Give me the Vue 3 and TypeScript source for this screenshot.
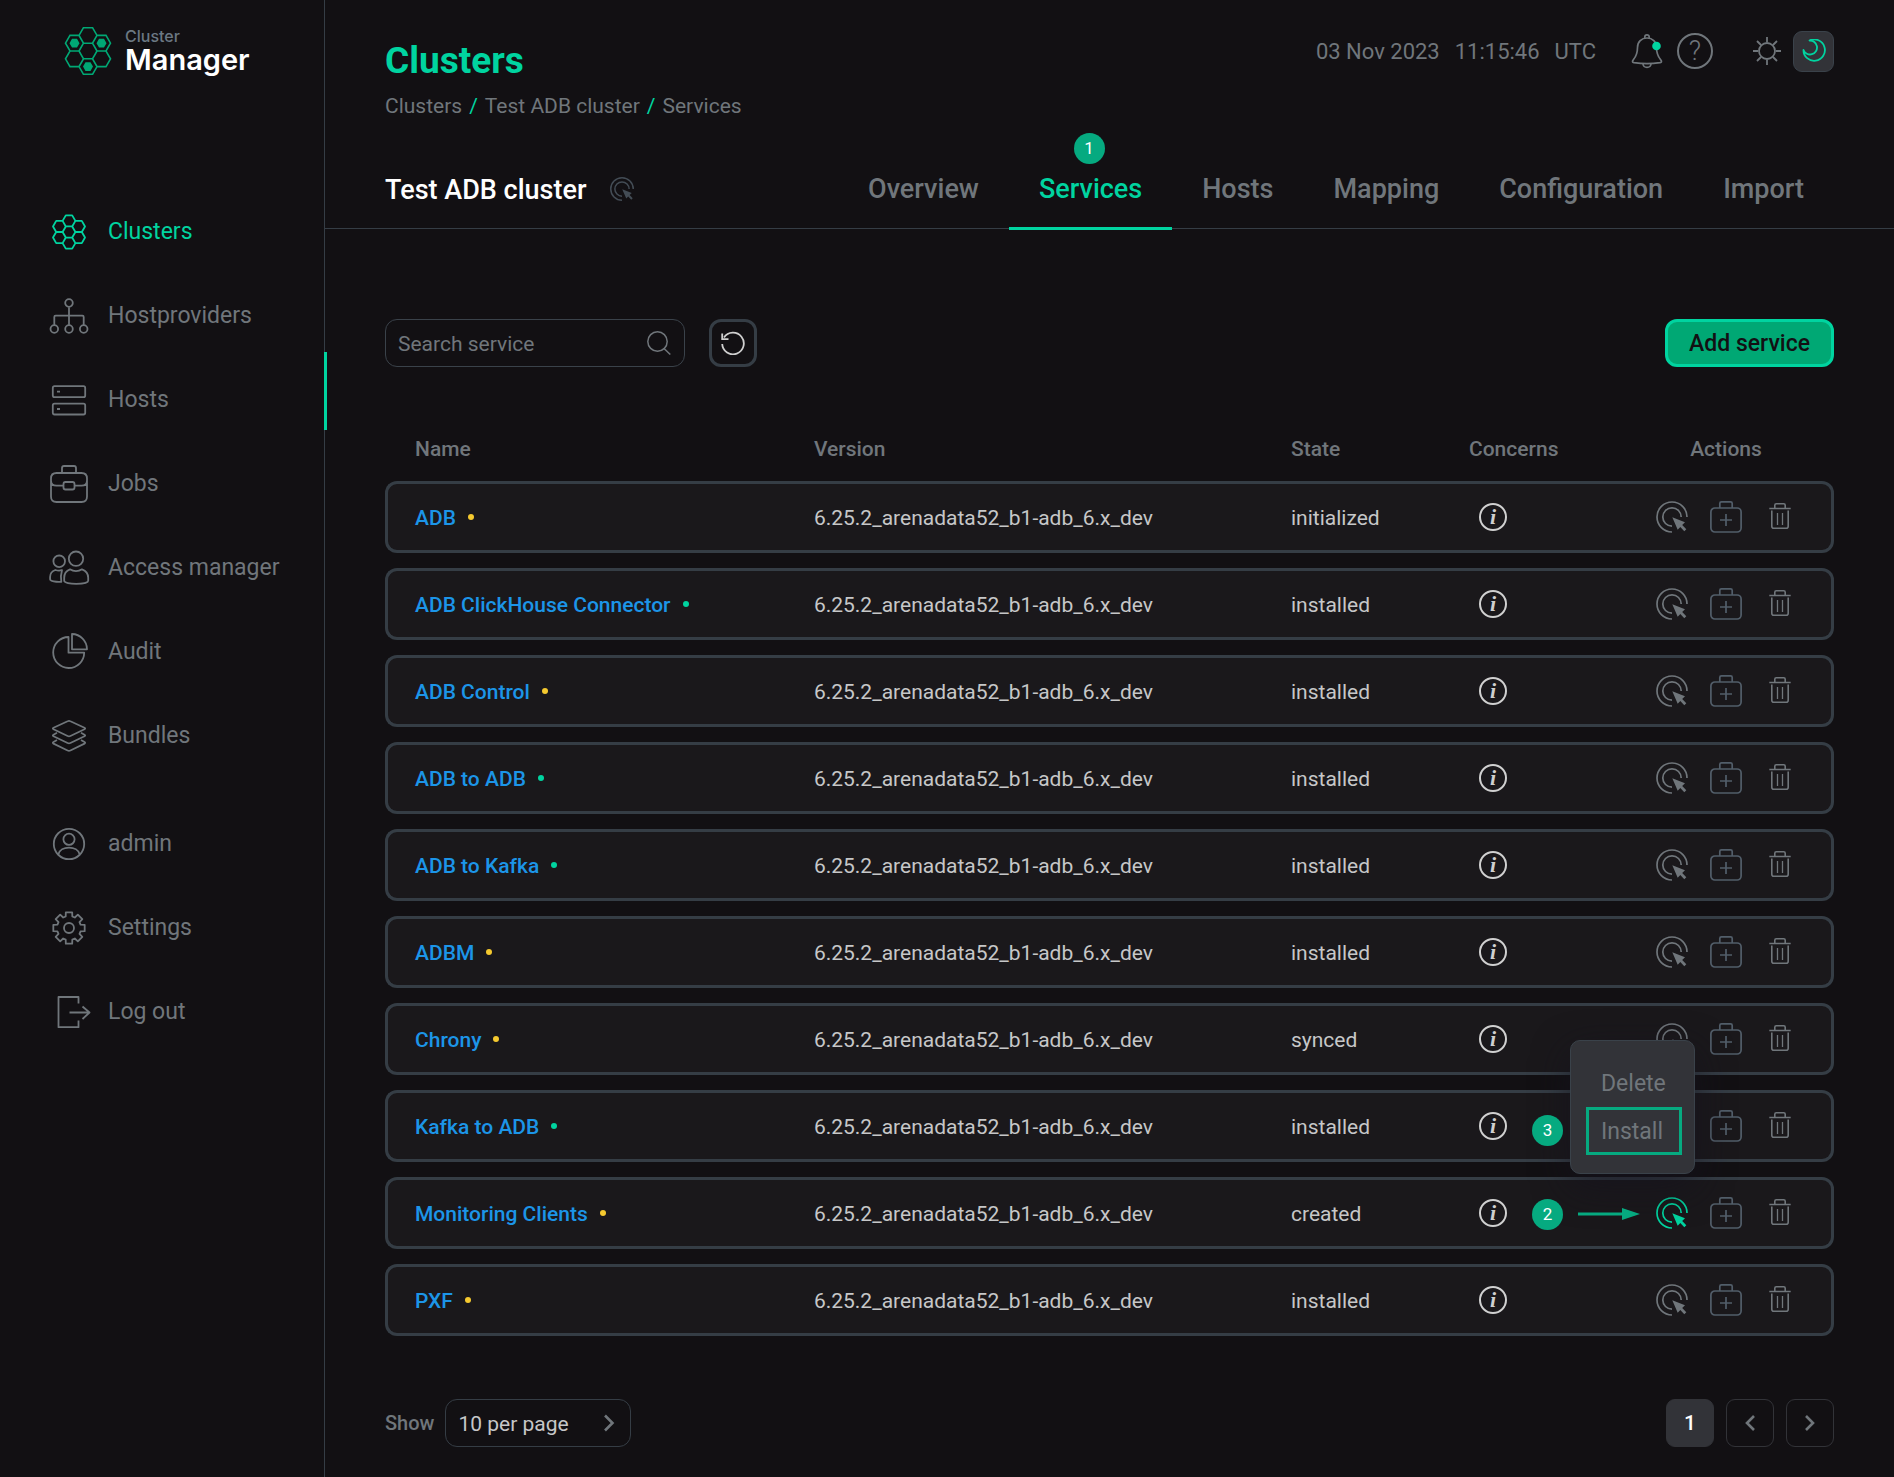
<script setup lang="ts">
import { ref } from 'vue'

interface NavItem {
  id: string
  label: string
  active?: boolean
}

interface Service {
  name: string
  state: string
  healthy: boolean
  menuOpen?: boolean
}

const mainNav: NavItem[] = [
  { id: 'clusters', label: 'Clusters', active: true },
  { id: 'hostproviders', label: 'Hostproviders' },
  { id: 'hosts', label: 'Hosts' },
  { id: 'jobs', label: 'Jobs' },
  { id: 'access', label: 'Access manager' },
  { id: 'audit', label: 'Audit' },
  { id: 'bundles', label: 'Bundles' },
]

const userNav: NavItem[] = [
  { id: 'admin', label: 'admin' },
  { id: 'settings', label: 'Settings' },
  { id: 'logout', label: 'Log out' },
]

const navGroups = [mainNav, userNav]

const tabs = ['Overview', 'Services', 'Hosts', 'Mapping', 'Configuration', 'Import']
const activeTab = 'Services'

const version = '6.25.2_arenadata52_b1-adb_6.x_dev'

const services: Service[] = [
  { name: 'ADB', state: 'initialized', healthy: false },
  { name: 'ADB ClickHouse Connector', state: 'installed', healthy: true },
  { name: 'ADB Control', state: 'installed', healthy: false },
  { name: 'ADB to ADB', state: 'installed', healthy: true },
  { name: 'ADB to Kafka', state: 'installed', healthy: true },
  { name: 'ADBM', state: 'installed', healthy: false },
  { name: 'Chrony', state: 'synced', healthy: false },
  { name: 'Kafka to ADB', state: 'installed', healthy: true },
  { name: 'Monitoring Clients', state: 'created', healthy: false, menuOpen: true },
  { name: 'PXF', state: 'installed', healthy: false },
]

const search = ref('')
const perPage = ref('10')

// Flat-top hexagon around (cx, cy) with circumradius r
function hexagon(cx: number, cy: number, r: number): string {
  const points: string[] = []
  for (let i = 0; i < 6; i++) {
    const a = (Math.PI / 3) * i
    points.push(`${(cx + r * Math.cos(a)).toFixed(2)} ${(cy + r * Math.sin(a)).toFixed(2)}`)
  }
  return `M${points.join('L')}Z`
}

// Honeycomb: one cell in the middle and six round it
function honeycomb(cx: number, cy: number, r: number): string {
  const h = Math.sqrt(3) * r
  const cells = [
    [0, 0],
    [0, -h],
    [0, h],
    [-1.5 * r, -h / 2],
    [1.5 * r, -h / 2],
    [-1.5 * r, h / 2],
    [1.5 * r, h / 2],
  ]
  return cells.map(([x, y]) => hexagon(cx + x, cy + y, r)).join('')
}

function gear(cx: number, cy: number): string {
  const points: string[] = []
  for (let i = 0; i < 8; i++) {
    const a = (Math.PI / 4) * i
    const steps: [number, number][] = [
      [12, -0.28],
      [16, -0.2],
      [16, 0.2],
      [12, 0.28],
    ]
    for (const [r, d] of steps) {
      points.push(`${(cx + r * Math.cos(a + d)).toFixed(2)} ${(cy + r * Math.sin(a + d)).toFixed(2)}`)
    }
  }
  return `M${points.join('L')}Z`
}

const logoCells = honeycomb(24, 24, 9)
const logoFill = hexagon(10.5, 16.2, 5) + hexagon(37.5, 16.2, 5) + hexagon(24, 39.6, 5)

const navPaths: Record<string, string> = {
  clusters: honeycomb(21, 22, 6.4),
  hostproviders:
    'M21 5.2a3.8 3.8 0 1 1 0 7.6a3.8 3.8 0 0 1 0-7.6M6.3 31.2a3.8 3.8 0 1 1 0 7.6a3.8 3.8 0 0 1 0-7.6M21 31.2a3.8 3.8 0 1 1 0 7.6a3.8 3.8 0 0 1 0-7.6M35.7 31.2a3.8 3.8 0 1 1 0 7.6a3.8 3.8 0 0 1 0-7.6M21 12.8V31M6.3 31V23q0-1.3 1.3-1.3H34.4q1.3 0 1.3 1.3V31',
  hosts:
    'M6.5 8.2H35.5q1.7 0 1.7 1.7V17.5q0 1.7-1.7 1.7H6.5q-1.7 0-1.7-1.7V9.9q0-1.7 1.7-1.7zM6.5 25.7H35.5q1.7 0 1.7 1.7V34.8q0 1.7-1.7 1.7H6.5q-1.7 0-1.7-1.7V27.4q0-1.7 1.7-1.7zM9 13.7h3M9 31h3',
  jobs:
    'M8.5 11h25q5.5 0 5.5 5.5v18q0 5.5-5.5 5.5h-25q-5.5 0-5.5-5.5v-18q0-5.5 5.5-5.5zM14 11V6q0-2 2-2h10q2 0 2 2v5M3 18.5q0 5.2 5.5 5.2h7M39 18.5q0 5.2-5.5 5.2h-7M17.5 20h7q2 0 2 2v3.5q0 2-2 2h-7q-2 0-2-2V22q0-2 2-2z',
  access:
    'M28 5.5a7.2 7.2 0 1 1 0 14.4a7.2 7.2 0 0 1 0-14.4M11.2 9.5a5.8 5.8 0 1 1 0 11.6a5.8 5.8 0 0 1 0-11.6M22 23.3c3.5 2.3 8.5 2.3 12 0c4 1.4 6.2 5 6.2 8.5v3c0 4-24 4-24 0v-3c0-3.5 1.8-7.1 5.8-8.5zM14 24.2q-3.2 1-6.7-.2c-3.5 1.2-5.2 4-5.2 7v2.2c0 2 6 3 11.2 2.6c-.8-4-.4-8 .7-11.6z',
  audit: 'M20.5 7v15.7h15.7A15.5 15.5 0 1 1 20.5 7zM24 4v15.3h15A15.3 15.3 0 0 0 24 4z',
  bundles:
    'M19.6 7.3q1.4-.7 2.8 0L36.5 13.7q1.4 .8 0 1.6L22.4 22q-1.4 .7-2.8 0L5.5 15.3q-1.4-.8 0-1.6zM9 18.8L5.5 20.7q-1.4 .8 0 1.6L19.6 29q1.4 .7 2.8 0L36.5 22.3q1.4-.8 0-1.6L33 18.8M9 26L5.5 28q-1.4 .8 0 1.6L19.6 36.5q1.4 .7 2.8 0L36.5 29.6q1.4-.8 0-1.6L33 26',
  admin:
    'M21 6.8a15.2 15.2 0 1 1 0 30.4a15.2 15.2 0 0 1 0-30.4M21 11.7a5.6 5.6 0 1 1 0 11.2a5.6 5.6 0 0 1 0-11.2M10.3 32.5c2-9.3 19.4-9.3 21.4 0',
  settings: gear(21, 22) + 'M21 17a5 5 0 1 1 0 10a5 5 0 0 1 0-10',
  logout: 'M30.5 13.5V7H10.5V37.2H30.5V30.5M21.5 22.5H41.5M34.5 16.5L41.5 22.5L34.5 29',
}
</script>

<template>
  <div class="app">
    <aside class="sidebar">
      <a class="logo" href="#">
        <svg class="logo-mark" viewBox="0 0 48 48" aria-hidden="true">
          <path :d="logoCells" fill="none" stroke="#00a874" stroke-width="1.6" />
          <path :d="logoFill" fill="#00a874" />
        </svg>
        <span class="logo-text">
          <span class="logo-small">Cluster</span>
          <span class="logo-big">Manager</span>
        </span>
      </a>
      <nav class="nav">
        <ul v-for="(group, g) in navGroups" :key="g" class="nav-group">
          <li v-for="item in group" :key="item.id">
            <a href="#" class="nav-item" :class="{ active: item.active }">
              <svg class="nav-icon" viewBox="0 0 42 42" aria-hidden="true">
                <path :d="navPaths[item.id]" />
              </svg>
              <span class="nav-label">{{ item.label }}</span>
            </a>
          </li>
        </ul>
      </nav>
      <span class="marker"></span>
    </aside>

    <main class="main">
      <header class="top">
        <div class="heading">
          <h1>Clusters</h1>
          <nav class="crumbs">
            <a href="#">Clusters</a>
            <span class="slash">/</span>
            <a href="#">Test ADB cluster</a>
            <span class="slash">/</span>
            <span>Services</span>
          </nav>
        </div>
        <div class="tools">
          <div class="clock">
            <span>03 Nov 2023</span>
            <span>11:15:46</span>
            <span>UTC</span>
          </div>
          <button class="plain bell" type="button" aria-label="Notifications">
            <svg viewBox="0 0 36 36" width="36" height="36">
              <g fill="none" stroke="currentColor" stroke-width="1.7" stroke-linejoin="round">
                <path d="M15.800 5.500V4a2.200 2.200 0 0 1 4.400 0v1.500" />
                <path d="M18 5c-5.500 0-9.500 3.800-9.500 9.500c0 6-1.500 9-4 12c-1.600 2-1.200 2.800.5 3.200q13 2 26 0c1.700-.4 2.100-1.200.5-3.200c-2.500-3-4-6-4-12C27.500 8.800 23.500 5 18 5z" />
                <path d="M14 31c.5 4.500 7.500 4.500 8 0" />
              </g>
              <circle cx="27.500" cy="13" r="4.300" fill="#00d4a0" />
            </svg>
          </button>
          <button class="plain help" type="button" aria-label="Help">?</button>
          <button class="plain sun" type="button" aria-label="Light theme">
            <svg viewBox="0 0 28 28" width="28" height="28" fill="none" stroke="currentColor" stroke-width="1.800">
              <circle cx="14" cy="14" r="8" />
              <path d="M14 0v5M14 23v5M0 14h5M23 14h5M4 4l4 4M20 20l4 4M24 4l-4 4M8 20l-4 4" />
            </svg>
          </button>
          <button class="plain moon" type="button" aria-label="Dark theme">
            <svg viewBox="0 0 24 24" width="24" height="24" fill="none" stroke="#00d4a0" stroke-width="1.800" stroke-linejoin="round">
              <path d="M7.500 1.500A10.700 10.700 0 1 1 1.500 11A7 7 0 1 0 7.500 1.500z" />
            </svg>
          </button>
        </div>
      </header>

      <div class="bar">
        <div class="cluster">
          <h2>Test ADB cluster</h2>
          <button class="plain cluster-action" type="button" aria-label="Cluster actions">
            <svg viewBox="0 0 32 32" width="24" height="24">
              <path d="M16 31A15 15 0 1 1 31 16M16 25.500A9.500 9.500 0 1 1 25.500 16" fill="none" stroke="currentColor" stroke-width="2" />
              <path d="M16.300 16.300L29 21.300L26.200 24L30.300 28.300L28.300 30.300L24.300 26L21.700 28.800z" fill="currentColor" />
            </svg>
          </button>
        </div>
        <nav class="tabs">
          <a v-for="tab in tabs" :key="tab" href="#" class="tab" :class="{ active: tab === activeTab }">
            {{ tab }}
            <span v-if="tab === activeTab" class="step step-one">1</span>
          </a>
        </nav>
      </div>

      <section class="content">
        <div class="toolbar">
          <div class="search">
            <input v-model="search" type="text" placeholder="Search service" aria-label="Search service" />
            <svg viewBox="0 0 24 24" width="24" height="24" fill="none" stroke="currentColor" stroke-width="1.500" aria-hidden="true">
              <circle cx="10.500" cy="10.500" r="9.700" />
              <path d="M17 17.500L23.300 23.500" />
            </svg>
          </div>
          <button class="refresh" type="button" aria-label="Reset filter">
            <svg viewBox="0 0 24 24" width="24" height="24" fill="none" stroke="currentColor" stroke-width="1.800" aria-hidden="true">
              <path d="M1.200 13A10.800 10.800 0 1 0 3 6.500" />
              <path d="M1.200 2.500V8.200H7.500" />
            </svg>
          </button>
          <button class="add" type="button">Add service</button>
        </div>

        <table class="services">
          <colgroup>
            <col class="col-name" />
            <col />
            <col class="col-state" />
            <col class="col-concerns" />
            <col class="col-actions" />
          </colgroup>
          <thead>
            <tr>
              <th>Name</th>
              <th>Version</th>
              <th>State</th>
              <th>Concerns</th>
              <th>Actions</th>
            </tr>
          </thead>
          <tbody>
            <tr v-for="service in services" :key="service.name">
              <td>
                <span class="name">
                  <a href="#">{{ service.name }}</a>
                  <i class="dot" :class="{ ok: service.healthy }"></i>
                </span>
              </td>
              <td class="text">{{ version }}</td>
              <td class="text">{{ service.state }}</td>
              <td><button class="info" type="button" aria-label="Concerns">i</button></td>
              <td>
                <div class="actions">
                  <button class="plain act" :class="{ on: service.menuOpen }" type="button" aria-label="Run action">
                    <svg viewBox="0 0 32 32" width="32" height="32">
                      <path d="M16 31A15 15 0 1 1 31 16M16 25.200A9.200 9.200 0 1 1 25.200 16" fill="none" stroke="currentColor" stroke-width="1.700" />
                      <path d="M16.300 16.300L29 21.300L26.200 24L30.300 28.300L28.300 30.300L24.300 26L21.700 28.800z" fill="currentColor" />
                    </svg>
                  </button>
                  <button class="plain act kit" type="button" aria-label="Maintenance mode">
                    <svg viewBox="0 0 32 32" width="32" height="32" fill="none" stroke="currentColor" stroke-width="1.700">
                      <rect x="0.900" y="7" width="30.200" height="24" rx="4" />
                      <path d="M9.800 7V2.500q0-1.600 1.600-1.600h9.200q1.600 0 1.600 1.600V7M16 13v12M10 19h12" />
                    </svg>
                  </button>
                  <button class="plain act" type="button" aria-label="Delete service">
                    <svg viewBox="0 0 32 32" width="32" height="32" fill="none" stroke="currentColor" stroke-width="1.600">
                      <path d="M5.300 7.500H26.700M10.800 7.500V4.300q0-1.500 1.500-1.500h7.400q1.500 0 1.500 1.500v3.200M7.800 9.500V25.200q0 2 2 2H22.200q2 0 2-2V9.500" />
                      <path d="M13.500 12v12M18.500 12v12" stroke-width="1.300" />
                    </svg>
                  </button>
                  <template v-if="service.menuOpen">
                    <div class="menu">
                      <button type="button">Delete</button>
                      <button class="picked" type="button">Install</button>
                    </div>
                    <span class="step step-three">3</span>
                    <span class="step step-two">2</span>
                    <svg class="arrow" viewBox="0 0 62 12" width="62" height="12" aria-hidden="true">
                      <path d="M0 4.500H44V0L62 6L44 12V7.500H0z" fill="#06aa80" />
                    </svg>
                  </template>
                </div>
              </td>
            </tr>
          </tbody>
        </table>

        <footer class="footer">
          <label for="per-page">Show</label>
          <div class="select">
            <select id="per-page" v-model="perPage">
              <option value="10">10 per page</option>
              <option value="30">30 per page</option>
              <option value="50">50 per page</option>
            </select>
            <svg viewBox="0 0 12 20" width="12" height="20" aria-hidden="true">
              <path d="M2 2.500L9.500 10L2 17.500" />
            </svg>
          </div>
          <div class="pages">
            <button class="page current" type="button">1</button>
            <button class="page" type="button" aria-label="Previous page">
              <svg viewBox="0 0 12 20" width="12" height="20"><path d="M10 3L3 10L10 17" /></svg>
            </button>
            <button class="page" type="button" aria-label="Next page">
              <svg viewBox="0 0 12 20" width="12" height="20"><path d="M2 3L9 10L2 17" /></svg>
            </button>
          </div>
        </footer>
      </section>
    </main>
  </div>
</template>

<style>
body {
  background: #121013;
}
</style>

<style scoped>
.app {
  display: flex;
  min-height: 100vh;
  background: #121013;
  color: #70767b;
  font-family: Roboto, 'Liberation Sans', sans-serif;
  font-size: 21px;
  line-height: 30px;
}
.app *,
.app *::after {
  box-sizing: border-box;
}
a {
  color: inherit;
  text-decoration: none;
}
button,
input,
select {
  font: inherit;
  color: inherit;
}
svg {
  display: block;
  flex: none;
}
h1,
h2,
ul {
  margin: 0;
  padding: 0;
}
.plain {
  display: flex;
  align-items: center;
  justify-content: center;
  padding: 0;
  border: 0;
  background: none;
}

.sidebar {
  position: relative;
  flex: none;
  width: 325px;
  border-right: 1px solid #353d45;
}
.marker {
  position: absolute;
  top: 352px;
  right: -3px;
  width: 3px;
  height: 78px;
  background: #00d4a0;
}
.logo {
  display: flex;
  gap: 13px;
  margin: 27px 0 0 64px;
}
.logo-mark {
  width: 48px;
  height: 48px;
}
.logo-text {
  display: flex;
  flex-direction: column;
  font-family: Inter, 'Open Sans', sans-serif;
}
.logo-small {
  font-size: 16px;
  font-weight: 500;
  line-height: 19px;
  color: #6b7883;
}
.logo-big {
  font-size: 29px;
  font-weight: 600;
  line-height: 28px;
  color: #fff;
}
.nav {
  display: flex;
  flex-direction: column;
  gap: 24px;
  margin-top: 114px;
}
.nav-group {
  list-style: none;
}
.nav-item {
  display: flex;
  align-items: center;
  gap: 18px;
  height: 84px;
  padding-left: 48px;
  font-size: 23px;
}
.nav-item.active {
  color: #00d4a0;
}
.nav-label {
  padding-top: 2px;
}
.nav-icon {
  width: 42px;
  height: 42px;
  overflow: visible;
  fill: none;
  stroke: currentColor;
  stroke-width: 1.8;
  stroke-linejoin: round;
}

.main {
  flex: 1;
  min-width: 0;
}
.top {
  display: flex;
  justify-content: space-between;
  align-items: flex-start;
  padding: 0 60px;
}
.heading {
  padding-top: 40px;
}
h1 {
  font-size: 37px;
  font-weight: 700;
  line-height: 42px;
  color: #00d4a0;
}
.crumbs {
  display: flex;
  gap: 7px;
  margin-top: 9px;
}
.slash {
  color: #00d4a0;
}
.tools {
  display: flex;
  align-items: center;
  padding-top: 31px;
}
.clock {
  display: flex;
  gap: 15px;
  margin-right: 33px;
  font-size: 22px;
}
.bell,
.help,
.sun {
  margin-bottom: 2px;
}
.help {
  width: 36px;
  height: 36px;
  margin-right: 40px;
  margin-left: 12px;
  border: 2px solid #70767b;
  border-radius: 50%;
  font-size: 27px;
  font-weight: 300;
}
.moon {
  width: 41px;
  height: 41px;
  margin-left: 12px;
  padding-bottom: 2px;
  border: 1px solid #3a424a;
  border-radius: 9px;
  background: #323338;
}

.bar {
  display: flex;
  justify-content: space-between;
  height: 80px;
  margin-top: 28px;
  padding: 0 60px;
  border-bottom: 1px solid #353d45;
  font-size: 27px;
}
.cluster {
  display: flex;
  align-items: center;
  gap: 24px;
}
h2 {
  padding-top: 2px;
  font-size: 27px;
  font-weight: 500;
  color: #fff;
}
.cluster-action {
  color: #434c55;
}
.tabs {
  display: flex;
}
.tab {
  position: relative;
  display: flex;
  align-items: center;
  padding: 0 30px;
  font-weight: 500;
}
.tab.active {
  color: #00d4a0;
}
.tab.active::after {
  content: '';
  position: absolute;
  right: 0;
  bottom: -2px;
  left: 0;
  height: 3px;
  background: #00d4a0;
}
.step {
  position: absolute;
  width: 31px;
  height: 31px;
  border-radius: 50%;
  background: #06aa80;
  color: #fff;
  font-size: 17px;
  font-weight: 400;
  line-height: 31px;
  text-align: center;
}
.step-one {
  top: -16px;
  left: calc(50% - 17px);
}

.content {
  padding: 90px 60px 30px;
}
.toolbar {
  display: flex;
  gap: 24px;
}
.search {
  display: flex;
  align-items: center;
  width: 300px;
  height: 48px;
  padding: 0 13px 0 12px;
  border: 1px solid #3a424a;
  border-radius: 12px;
}
.search input {
  flex: 1;
  min-width: 0;
  padding: 2px 0 0;
  border: 0;
  outline: 0;
  background: none;
}
.search input::placeholder {
  color: #70767b;
  opacity: 1;
}
.refresh {
  display: flex;
  align-items: center;
  justify-content: center;
  width: 48px;
  height: 48px;
  padding: 0;
  border: 3px solid #353d45;
  border-radius: 12px;
  background: none;
  color: #d0d0d0;
}
.add {
  height: 48px;
  margin-left: auto;
  padding: 2px 21px 0;
  border: 3px solid #00d4a0;
  border-radius: 12px;
  background: #00a874;
  color: #121013;
  font-size: 23px;
  font-weight: 500;
}

.services {
  width: 100%;
  margin-top: 50px;
  border-collapse: separate;
  border-spacing: 0 15px;
  table-layout: fixed;
}
.col-name {
  width: 29.6%;
}
.col-state {
  width: 178px;
}
.col-concerns {
  width: 149px;
}
.col-actions {
  width: 216px;
}
th {
  height: 34px;
  padding: 0;
  font-weight: 500;
  text-align: left;
}
th:first-child {
  padding-left: 30px;
}
th:last-child {
  text-align: center;
}
td {
  height: 72px;
  padding: 0;
  border: solid #353d45;
  border-width: 3px 0;
  background: #1a181b;
  color: #c6c7c8;
}
td:first-child {
  padding-left: 27px;
  border-left-width: 3px;
  border-radius: 12px 0 0 12px;
}
td:nth-child(4) {
  padding-left: 10px;
}
td:last-child {
  padding-left: 3px;
  border-right-width: 3px;
  border-radius: 0 12px 12px 0;
}
td.text,
.name a {
  padding-top: 2px;
}
.name {
  display: flex;
  align-items: center;
  gap: 12px;
  color: #1c95e8;
  font-weight: 500;
}
.dot {
  width: 6px;
  height: 6px;
  border-radius: 50%;
  background: #f5c92f;
}
.dot.ok {
  background: #00d4a0;
}
.info {
  display: block;
  width: 28px;
  height: 28px;
  padding: 0;
  border: 2px solid #d0d0d0;
  border-radius: 50%;
  background: none;
  color: #d0d0d0;
  font: italic bold 22px/22px 'Liberation Serif', serif;
}
.actions {
  position: relative;
  display: flex;
  justify-content: center;
  gap: 18px;
}
.act {
  width: 36px;
  height: 36px;
  color: #70767b;
}
.act.kit {
  color: #525e6a;
}
.act.on {
  color: #00d4a0;
}
.menu {
  position: absolute;
  right: 136px;
  bottom: 57px;
  z-index: 1;
  width: 125px;
  padding: 18px 12px 18px 15px;
  border: 1px solid #3a424a;
  border-radius: 10px;
  background: #323338;
  box-shadow: 0 12px 36px rgba(22, 18, 30, 0.7);
}
.menu button {
  display: block;
  width: 100%;
  height: 48px;
  padding: 2px 12px 0;
  border: 3px solid transparent;
  background: none;
  color: #70767b;
  font-size: 23px;
  text-align: left;
}
.menu .picked {
  border-color: #06aa80;
}
.step-two,
.step-three {
  right: 268px;
  z-index: 1;
}
.step-two {
  top: 4px;
}
.step-three {
  bottom: 85px;
}
.arrow {
  position: absolute;
  top: 13px;
  right: 191px;
  z-index: 1;
}

.footer {
  display: flex;
  align-items: center;
  margin-top: 48px;
}
.footer label {
  font-size: 20px;
  font-weight: 500;
}
.select {
  position: relative;
  width: 186px;
  margin-left: 11px;
}
.select select {
  display: block;
  width: 100%;
  height: 48px;
  padding: 2px 12px 0;
  border: 1px solid #353d45;
  border-radius: 12px;
  appearance: none;
  background: none;
  color: #c6c7c8;
}
.select svg {
  position: absolute;
  top: 14px;
  right: 16px;
  pointer-events: none;
}
.select path,
.page path {
  fill: none;
  stroke: #70767b;
  stroke-width: 2.6;
}
.pages {
  display: flex;
  gap: 12px;
  margin-left: auto;
}
.page {
  display: flex;
  align-items: center;
  justify-content: center;
  width: 48px;
  height: 48px;
  padding: 0;
  border: 1px solid #323338;
  border-radius: 9px;
  background: none;
}
.page.current {
  background: #323338;
  color: #fff;
  font-weight: 500;
}
</style>
